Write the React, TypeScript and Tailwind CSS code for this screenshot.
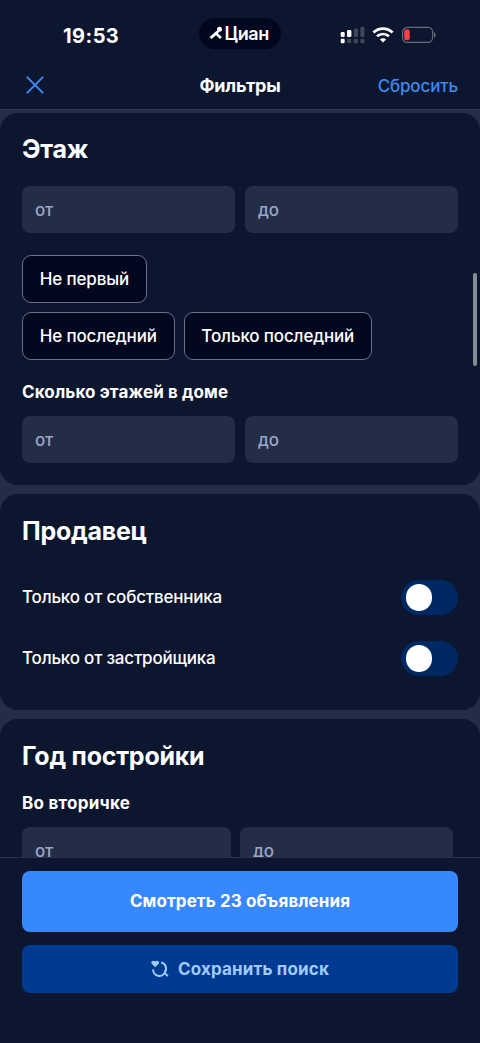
import { useState, type ReactNode } from "react";

function StatusBar() {
  return (
    <div className="grid h-[62px] shrink-0 grid-cols-[199px_82px_1fr] pt-[18px]">
      <div className="flex h-[35px] items-center pl-[63px] text-[20px] font-bold tracking-[0.45px]">19:53</div>
      <div className="flex h-[31px] items-center rounded-full bg-[#020720] pl-[10px]">
        <svg className="-mt-px h-[14px] w-[15px] shrink-0" viewBox="0 0 15 14">
          <path d="M0.7 10.9 6.8 5.4 8.8 4.2 10.4 5.4 8.9 7.4 12.9 11.1 11.1 13 7 9.3 2.5 13Z" fill="white" />
          <circle cx="10.5" cy="3.3" r="2.5" fill="white" />
        </svg>
        <span className="ml-[0.5px] text-[18px] leading-none font-semibold tracking-[-0.35px]">Циан</span>
      </div>
      <div className="flex h-[34px] items-center pl-[59px]">
        <svg className="h-[18px] w-[25px]" viewBox="0 0 25 18">
          <g fill="white">
            <rect x="0.7" y="6" width="4" height="5" rx="1.3" />
            <rect x="7" y="4" width="4.4" height="7" rx="1.3" />
            <rect x="0.7" y="12.8" width="4" height="4.4" rx="1.3" />
          </g>
          <g fill="#414759">
            <rect x="13.8" y="2.5" width="4.2" height="8.5" rx="1.3" />
            <rect x="20.4" y="0.8" width="4" height="10.2" rx="1.3" />
            <rect x="7.2" y="12.8" width="4" height="4.4" rx="1.3" />
            <rect x="13.8" y="12.8" width="4" height="4.4" rx="1.3" />
            <rect x="20.4" y="12.8" width="4" height="4.4" rx="1.3" />
          </g>
        </svg>
        <svg className="ml-[7px] h-[16px] w-[22px]" viewBox="0 0 22 16" fill="none" stroke="white">
          <path d="M1.4 5.6C6.9.4 15.1.4 20.6 5.6" strokeWidth="2.8" />
          <path d="M5 9.3c3.5-3.1 8.5-3.1 12 0" strokeWidth="2.6" />
          <path d="M11 15.6 7.9 12.4c1.8-1.6 4.4-1.6 6.2 0Z" fill="white" stroke="none" />
        </svg>
        <svg className="ml-[7px] h-[18px] w-[36px]" viewBox="0 0 36 18">
          <rect x="1.6" y="1.4" width="30" height="15" rx="4.6" fill="none" stroke="#666b7b" strokeWidth="1.2" />
          <path d="M33 6.2c2 .8 2 4.6 0 5.4Z" fill="#747988" />
          <rect x="3.2" y="3.3" width="5.6" height="11" rx="2.5" fill="#fa3e42" />
        </svg>
      </div>
    </div>
  );
}

function NavBar() {
  return (
    <div className="grid h-[47px] shrink-0 grid-cols-3 items-center px-[22px]">
      <button className="ml-[4px] w-[18px]" aria-label="Закрыть">
        <svg className="-mt-px h-[18px] w-[18px]" viewBox="0 0 18 18" fill="none">
          <path d="M1.4 1.4l15.2 15.2M16.6 1.4 1.4 16.6" stroke="#3f89f2" strokeWidth="2" strokeLinecap="round" />
        </svg>
      </button>
      <div className="text-center text-[18px] font-bold tracking-[-0.2px]">Фильтры</div>
      <button className="pt-[2px] text-right text-[17px] font-medium tracking-[-0.15px] text-[#3f89f2]">Сбросить</button>
    </div>
  );
}

function Card({ title, className, children }: { title: string; className: string; children: ReactNode }) {
  return (
    <section className={`shrink-0 rounded-[18px] bg-[#0d162f] px-[22px] ${className}`}>
      <h2 className="text-[25px] leading-[34px] font-bold tracking-[-0.25px]">{title}</h2>
      {children}
    </section>
  );
}

function RangeFields({ className }: { className: string }) {
  return (
    <div className={`grid ${className}`}>
      {["от", "до"].map((label) => (
        <input
          key={label}
          placeholder={label}
          aria-label={label}
          className="h-[47px] w-full min-w-0 rounded-[8px] bg-[#232d46] px-[13px] text-[17px] font-medium tracking-[-0.2px] outline-none placeholder:text-[#9ba6c8]"
        />
      ))}
    </div>
  );
}

function Chip({ children }: { children: ReactNode }) {
  return (
    <button className="h-[48px] rounded-[9px] border border-[#66718e] bg-[#020720] px-[16.75px] pt-px text-[17px] font-medium tracking-[-0.15px]">
      {children}
    </button>
  );
}

function ToggleRow({ label }: { label: string }) {
  const [on, setOn] = useState(false);
  return (
    <div className="flex h-[35px] items-center justify-between">
      <span className="text-[17px] font-medium tracking-[-0.2px]">{label}</span>
      <button
        role="switch"
        aria-checked={on}
        aria-label={label}
        onClick={() => setOn(!on)}
        className={`flex h-[35px] w-[57px] items-center rounded-full bg-[#002963] px-[4.5px] ${on ? "justify-end" : "justify-start"}`}
      >
        <span className="h-[26.5px] w-[26.5px] rounded-full bg-white" />
      </button>
    </div>
  );
}

export default function App() {
  return (
    <div className="flex h-[1043px] w-[480px] flex-col overflow-hidden bg-[#0d162f] font-['Inter','Noto_Sans',sans-serif] text-white">
      <StatusBar />
      <NavBar />

      <main className="relative flex h-[748px] shrink-0 flex-col gap-[9px] overflow-hidden border-t border-[#30394f] bg-[#232d46] pt-[3px]">
        <Card title="Этаж" className="h-[372px] pt-[19px]">
          <RangeFields className="mt-[20px] grid-cols-2 gap-[10px]" />
          <div className="mt-[22px] flex flex-wrap gap-[9px]">
            <Chip>Не первый</Chip>
            <div className="flex gap-[9px]">
              <Chip>Не последний</Chip>
              <Chip>Только последний</Chip>
            </div>
          </div>
          <h3 className="mt-[19px] text-[17px] leading-[26px] font-bold tracking-[0.12px]">Сколько этажей в доме</h3>
          <RangeFields className="mt-[11px] grid-cols-2 gap-[10px]" />
        </Card>

        <Card title="Продавец" className="h-[216px] pt-[20px]">
          <div className="mt-[32px] flex flex-col gap-[26px]">
            <ToggleRow label="Только от собственника" />
            <ToggleRow label="Только от застройщика" />
          </div>
        </Card>

        <Card title="Год постройки" className="h-[240px] pt-[20px]">
          <h3 className="mt-[17px] text-[17px] leading-[26px] font-bold tracking-[0.25px]">Во вторичке</h3>
          <RangeFields className="mt-[11px] grid-cols-[209px_213px] gap-[9px]" />
        </Card>

        <div className="absolute top-[163px] right-[3px] h-[93px] w-[4px] rounded-full bg-[#868b98]" />
      </main>

      <footer className="flex flex-1 flex-col border-t border-[#28324b] px-[22px] pt-[13px]">
        <button className="h-[61px] rounded-[8px] bg-[#3788ff] pt-px text-[17px] font-bold tracking-[0.08px]">
          Смотреть 23 объявления
        </button>
        <button className="mt-[13px] flex h-[48px] items-center justify-center rounded-[8px] bg-[#003b91] pt-px text-[17px] font-bold tracking-[0.15px] text-[#a1cbff]">
          <svg className="-mt-px mr-[9px] h-[18px] w-[18px]" viewBox="0 0 18 18" fill="none">
            <path d="M4.2 7.2.8 3.8C-.9 1.8 2.3-.7 4.2 1.6 6.1-.7 9.3 1.8 7.6 3.8Z" fill="#a1cbff" />
            <path d="M10.2 2.6a6.1 6.1 0 0 1 3.7 9.6 6.1 6.1 0 0 1-11.7-2.8M13.6 12.7l3.2 3.4" stroke="#a1cbff" strokeWidth="2" />
          </svg>
          Сохранить поиск
        </button>
      </footer>
    </div>
  );
}
